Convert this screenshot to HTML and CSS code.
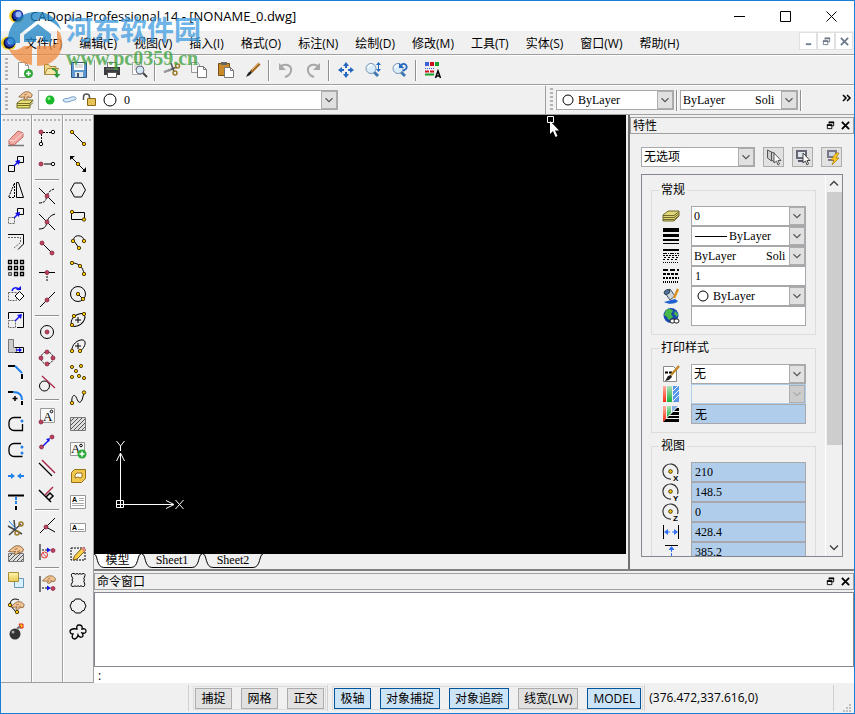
FILE: index.html
```html
<!DOCTYPE html>
<html lang="zh-CN">

<head>
  <meta charset="UTF-8" />
  <meta name="viewport" content="width=device-width, initial-scale=1.0" />
  <title>CADopia Professional 14 - [NONAME_0.dwg]</title>
  <link rel="stylesheet" href="styles.css">
</head>

<body>
  <svg class="defs" aria-hidden="true">
    <defs>
      <linearGradient id="redFade" x1="0" y1="0" x2="0" y2="1"><stop offset="0" stop-color="#ffb0a0" /><stop offset="1" stop-color="#ff2a10" /></linearGradient>
      <linearGradient id="greenFade" x1="0" y1="0" x2="0" y2="1"><stop offset="0" stop-color="#b0e0b8" /><stop offset="1" stop-color="#18b040" /></linearGradient>
      <linearGradient id="gold" x1="0" y1="0" x2="0" y2="1"><stop offset="0" stop-color="#fff8b0" /><stop offset="1" stop-color="#e8c850" /></linearGradient>
    </defs>
    <symbol id="chevron" viewBox="0 0 16 16"><path d="M4 6l4 4 4-4" fill="none" stroke="currentColor" stroke-width="1.3" /></symbol>
    <symbol id="hand" viewBox="0 0 16 10"><path d="M.5 6.500L5 2.500 8 .8l4 .2 3.500 3-1 3-3.500.5L8 9.500l-2-.7L7.500 6.500 4 7z" fill="#f3c795" stroke="#7a4a20" stroke-width=".8" /><path d="M6.500 4.500l3-1M9 7l3-1.500" stroke="#7a4a20" stroke-width=".7" /></symbol>
    <symbol id="lens" viewBox="0 0 18 18"><path d="M10 11l4 4" stroke="#3f78b0" stroke-width="3" /><circle cx="7" cy="7.500" r="5" fill="#d8ecfa" stroke="#7896b4" /><path d="M4 7a4 4 0 0 1 4-3" fill="none" stroke="#fff" stroke-width="1.500" /></symbol>
    <symbol id="logo" viewBox="0 0 16 16"><circle cx="6.500" cy="8" r="6.500" fill="#f4d020" /><circle cx="8.500" cy="8" r="6" fill="#10143c" /><circle cx="9" cy="7" r="5" fill="#2440b8" /><circle cx="9.500" cy="6.500" r="3" fill="#9bb8ff" /><path d="M5 13.500a7 7 0 0 0 9-4l.5 2c-2 4-6 4-9.500 2z" fill="#f4d020" /></symbol>
    <symbol id="restore" viewBox="0 0 10 10"><path d="M3.500 3V1.500h5v4H7M1.500 4.500h5v4h-5z" fill="none" stroke="currentColor" /><path d="M3 1.500h6M1 4.500h6" stroke="currentColor" stroke-width="2" /></symbol>
    <symbol id="cross" viewBox="0 0 10 10"><path d="M1 1l8 8M9 1L1 9" stroke="currentColor" stroke-width="2" /></symbol>
    <symbol id="orbit" viewBox="0 0 18 18"><path d="M15.500 11A7.500 7.500 0 1 0 9 16" fill="none" stroke="#333" stroke-width="1.200" /><circle cx="8.500" cy="8.500" r="1.800" class="dot-gold" /></symbol>
  </svg>

  <header class="titlebar">
    <svg class="app-icon"><use href="#logo" /></svg>
    <h1 class="title">CADopia Professional 14 - [NONAME_0.dwg]</h1>
    <button class="win-btn" aria-label="最小化"><svg viewBox="0 0 11 11"><path class="line" d="M0 5.500h11" /></svg></button>
    <button class="win-btn" aria-label="最大化"><svg viewBox="0 0 11 11"><path class="line" d="M.5.5h10v10H.5z" /></svg></button>
    <button class="win-btn" aria-label="关闭"><svg viewBox="0 0 11 11"><path class="line" d="M.5.5l10 10M10.500.5l-10 10" /></svg></button>
  </header>

  <nav class="menubar">
    <svg class="menu-logo"><use href="#logo" /></svg>
    <button class="menu">文件(F)</button>
    <button class="menu">编辑(E)</button>
    <button class="menu">视图(V)</button>
    <button class="menu">插入(I)</button>
    <button class="menu">格式(O)</button>
    <button class="menu">标注(N)</button>
    <button class="menu">绘制(D)</button>
    <button class="menu">修改(M)</button>
    <button class="menu">工具(T)</button>
    <button class="menu">实体(S)</button>
    <button class="menu">窗口(W)</button>
    <button class="menu">帮助(H)</button>
    <div class="mdi">
      <button class="mdi-btn" aria-label="最小化文档"><svg viewBox="0 0 10 10"><path d="M2 8h6" stroke="currentColor" stroke-width="2" /></svg></button>
      <button class="mdi-btn" aria-label="还原文档"><svg><use href="#restore" /></svg></button>
      <button class="mdi-btn" aria-label="关闭文档"><svg><use href="#cross" /></svg></button>
    </div>
  </nav>

  <div class="toolbar">
    <span class="handle"></span>
    <button class="tool" aria-label="新建"><svg viewBox="0 0 18 18"><path d="M2.500 1.500h7l3 3v12h-10z" fill="#fff" stroke="#999" /><path d="M9.500 1.500v3h3" fill="none" stroke="#999" /><circle cx="12.500" cy="12.500" r="4.500" fill="#2fa83a" /><path d="M12.500 10v5M10 12.500h5" stroke="#fff" stroke-width="1.500" /></svg></button>
    <button class="tool" aria-label="打开"><svg viewBox="0 0 18 18"><path d="M1.500 13V3.500h4l1.500 2h6V8" fill="#f0d98c" stroke="#a88838" /><path d="M1.500 13.500l3-6h11l-3 6z" fill="#f8e6a8" stroke="#a88838" /><path d="M9 8c4 0 5 2 5 6" fill="none" stroke="#2f9a3a" stroke-width="2" /><path d="M10.500 13h7L14 17z" fill="#2f9a3a" /></svg></button>
    <button class="tool" aria-label="保存"><svg viewBox="0 0 18 18"><path d="M1.500 1.500h15v15h-15z" fill="#5f98cf" stroke="#2c5888" /><path d="M4 2h10v7H4z" fill="#fff" /><path d="M5 4h8M5 6h8" stroke="#bbb" /><path d="M5 11h8v5H5z" fill="#dde4ec" /><path d="M7 12h2v4H7z" fill="#456" /></svg></button>
    <span class="sep"></span>
    <button class="tool" aria-label="打印"><svg viewBox="0 0 18 18"><path d="M4.500 7V1.500h9V7" fill="#fff" stroke="#777" /><path d="M1 6h16v8H1z" fill="#3a3c40" /><path d="M3 8h12" stroke="#888" /><path d="M4.500 11.500h9v5h-9z" fill="#fff" stroke="#555" /></svg></button>
    <button class="tool" aria-label="打印预览"><svg viewBox="0 0 18 18"><path d="M2.500 1.500h9v12h-9z" fill="#fff" stroke="#aaa" /><path d="M4 4h6M4 6h6M4 8h3" stroke="#bbb" /><circle cx="10" cy="9" r="4" fill="#d5e8f5" stroke="#667" /><path d="M13 12l4 4" stroke="#444" stroke-width="2" /></svg></button>
    <span class="sep"></span>
    <button class="tool" aria-label="剪切"><svg viewBox="0 0 18 18"><path d="M8 2l3 9M1 11l13-5" stroke="#555" stroke-width="1.600" /><circle cx="14.500" cy="5" r="2" class="ring-gold" /><circle cx="12" cy="12" r="2" class="ring-gold" /><path d="M1 11l7-2" stroke="#999" stroke-width="2" /></svg></button>
    <button class="tool" aria-label="复制"><svg viewBox="0 0 18 18"><path d="M1.500 1.500h6l2 2v8h-8z" fill="#f4f4f4" stroke="#999" /><path d="M7.500 5.500h6l3 3v8h-9z" fill="#fff" stroke="#777" /><path d="M13.500 5.500v3h3" fill="none" stroke="#777" /></svg></button>
    <button class="tool" aria-label="粘贴"><svg viewBox="0 0 18 18"><path d="M1.500 2.500h11v12h-11z" fill="#c98a2c" stroke="#7a5014" /><path d="M4 1h6v3H4z" fill="#666" /><path d="M7.500 6.500h6l3 3v7h-9z" fill="#fff" stroke="#777" /><path d="M13.500 6.500v3h3" fill="none" stroke="#777" /></svg></button>
    <button class="tool" aria-label="特性匹配"><svg viewBox="0 0 18 18"><path d="M15.500 2.500L7 11" stroke="#a06420" stroke-width="3" /><path d="M15 2L8 9" stroke="#e8b060" /><path d="M2 16l2-4 2.500-2L8 11.500 6 14z" fill="#222" /></svg></button>
    <span class="sep"></span>
    <button class="tool" aria-label="放弃"><svg viewBox="0 0 18 18"><path d="M4 5c6-3 11 0 10 5-.5 3-3 5-6 6" class="undo" /><path d="M2 2v7h7z" fill="#a8a8a8" /></svg></button>
    <button class="tool" aria-label="重做"><svg viewBox="0 0 18 18"><path d="M14 5C8 2 3 5 4 10c.5 3 3 5 6 6" class="undo" /><path d="M16 2v7H9z" fill="#a8a8a8" /></svg></button>
    <span class="sep"></span>
    <button class="tool" aria-label="平移"><svg viewBox="0 0 18 18"><path d="M9 1l3 4H6zM9 17l3-4H6zM1 9l4-3v6zM17 9l-4-3v6z" fill="#2468c0" /><path d="M9 4v3M9 11v3M4 9h3M11 9h3" stroke="#2468c0" stroke-width="2" /></svg></button>
    <button class="tool" aria-label="动态缩放"><svg viewBox="0 0 18 18"><use href="#lens" width="18" height="18" /><path d="M14.500 1l2.500 3h-5zM14.500 11L17 8h-5zM14 4h1v4h-1z" fill="#2468c0" /></svg></button>
    <button class="tool" aria-label="缩放上一个"><svg viewBox="0 0 18 18"><use href="#lens" width="18" height="18" /><path d="M10 4c4-3 7 1 5 4l-3 2" fill="none" stroke="#2468c0" stroke-width="1.700" /><path d="M8 2v5h5z" fill="#2468c0" /></svg></button>
    <span class="sep"></span>
    <button class="tool" aria-label="特性"><svg viewBox="0 0 18 18"><path d="M1 1h4v4H1z" fill="#4060d8" /><path d="M6 1h4v4H6z" fill="#d01020" /><path d="M11 1h4v4h-4z" fill="#18a028" /><path d="M1 7.500h9" stroke="#4060d8" stroke-dasharray="1 1" /><path d="M1 10.500h9" stroke="#d01020" stroke-width="2" stroke-dasharray="4 1" /><path d="M1 13.500h9" stroke="#18a028" stroke-width="2" /><path d="M11.500 17l2.500-7 2.500 7M12 15h4" class="line" stroke-width="1.500" /></svg></button>
  </div>

  <div class="toolbar-row">
    <div class="toolbar layer-bar">
      <span class="handle"></span>
      <button class="tool" aria-label="图层"><svg viewBox="0 0 18 18"><path d="M1 12l4-3h12l-3 3v5H1z" fill="#e8e070" stroke="#77702a" /><path d="M1 12.500h13l3-3M1 14.500h13l3-3" fill="none" stroke="#77702a" /><use href="#hand" x="2" y="0" width="15" height="9" /></svg></button>
      <div class="combo layer-combo">
        <svg class="layer-icons" viewBox="0 0 76 16"><circle cx="6" cy="8" r="4.500" fill="#18b828" /><circle cx="5" cy="6.500" r="1.500" fill="#8cf090" /><path d="M19 8c1-2 4-1 6-2s6-2 7 0-3 2-5 3-8 2-8-1z" fill="#d8ecfc" stroke="#7098c0" /><path d="M39.500 8V5a3 3 0 0 1 6 0v3" fill="none" stroke="#555" stroke-width="1.500" /><path d="M43.500 6.500h8v7h-8z" fill="#e8c458" stroke="#8a6818" /><circle cx="66" cy="8" r="6" class="line" /></svg>
        <select aria-label="当前图层"><option>0</option></select>
        <span class="arrow"><svg><use href="#chevron" /></svg></span>
      </div>
    </div>
    <div class="toolbar prop-bar">
      <span class="handle"></span>
      <div class="combo color-combo">
        <svg class="swatch" viewBox="0 0 12 12"><circle cx="6" cy="6" r="5" class="line" /></svg>
        <select aria-label="颜色"><option>ByLayer</option></select>
        <span class="arrow"><svg><use href="#chevron" /></svg></span>
      </div>
      <span class="sep"></span>
      <div class="combo">
        <select aria-label="线型"><option>ByLayer&nbsp;&nbsp;&nbsp;&nbsp;&nbsp;&nbsp;&nbsp;&nbsp;&nbsp;&nbsp;Soli</option></select>
        <span class="arrow"><svg><use href="#chevron" /></svg></span>
      </div>
      <span class="sep"></span>
      <button class="more" aria-label="更多"><svg viewBox="0 0 10 8"><path class="line" stroke-width="1.500" d="M1 1l3 3-3 3M5 1l3 3-3 3" /></svg></button>
    </div>
  </div>

  <main class="workspace">
    <aside class="palettes">
      <!-- modify -->
      <div class="palette">
        <span class="grip"></span>
        <button class="tool" aria-label="删除"><svg viewBox="0 0 18 18"><path d="M1 16.500h16" stroke="#777" stroke-width="1.500" /><path d="M2 11l9-9 5 2v4l-9 8-5-1z" fill="#f0a8a0" stroke="#c06860" /><path d="M2 11l5 1 9-8" fill="none" stroke="#fbd8d4" /></svg></button>
        <button class="tool" aria-label="复制"><svg viewBox="0 0 18 18"><path class="line" d="M10.500 1.500h6v6h-6zM1.500 10.500h6v6h-6z" /><path class="blue-line" d="M7 11l5-5" /><path class="blue" d="M8 6l5-1-1 5z" /></svg></button>
        <button class="tool" aria-label="镜像"><svg viewBox="0 0 18 18"><path class="dash" d="M7.500 2v14.500h-6z" /><path class="line" d="M9.500 1.500h2l5 15h-7z" /></svg></button>
        <button class="tool" aria-label="移动"><svg viewBox="0 0 18 18"><path class="line" d="M10.500 1.500h6v6h-6z" /><path class="dash gray" d="M1.500 10.500h6v6h-6z" /><path class="blue-line" d="M7 11l5-5" /><path class="blue" d="M8 6l5-1-1 5z" /></svg></button>
        <button class="tool" aria-label="偏移"><svg viewBox="0 0 18 18"><path class="line" d="M1 1.500h15.500V11L11 16.500" /><path class="dash gray" d="M1 4.500h12.500v5l-7 6" /></svg></button>
        <button class="tool" aria-label="阵列"><svg viewBox="0 0 18 18"><path class="line" stroke-width="1.300" d="M1.500 1.500h3v3h-3zM7.500 1.500h3v3h-3zM13.500 1.500h3v3h-3zM1.500 7.500h3v3h-3zM7.500 7.500h3v3h-3zM13.500 7.500h3v3h-3zM7.500 13.500h3v3h-3zM13.500 13.500h3v3h-3z" /><path d="M1.500 13.500h3v3h-3z" fill="#aaa" stroke="#555" /></svg></button>
        <button class="tool" aria-label="旋转"><svg viewBox="0 0 18 18"><path class="dash gray" d="M1.500 7.500h8v8h-8z" /><path d="M12.500 6.500L17 11l-4.500 4.500L8 11z" fill="#fff" stroke="#000" /><path class="blue-line" d="M5 6c1-4 5-4 7-1" /><path class="blue" d="M9 5h5V1z" /></svg></button>
        <button class="tool" aria-label="比例"><svg viewBox="0 0 18 18"><path class="line" d="M1.500 8V1.500h15v15H10" /><path class="dash gray" d="M1.500 9.500h7v7h-7z" /><path class="blue-line" d="M8 10l5-5" /><path class="blue" d="M10 4l5-1-1 5z" /></svg></button>
        <button class="tool" aria-label="拉伸"><svg viewBox="0 0 18 18"><path d="M1.500 2.500h5v8h3v5h-8z" fill="#ccc" stroke="#777" /><path class="line" d="M8 10.500h8.500v5H8" /><path class="blue-line" d="M9 13h3" /><path class="blue" d="M12 10.500v5l3-2.500z" /></svg></button>
        <button class="tool" aria-label="倒角"><svg viewBox="0 0 18 18"><path class="line bold" d="M1 3h7M15 11v5" /><path class="sky-line" d="M8 3l7 7" /></svg></button>
        <button class="tool" aria-label="圆角"><svg viewBox="0 0 18 18"><path class="line bold" d="M1 3h5M15 12v4" /><path class="sky-line" d="M6 3c6 0 9 3 9 8" /><path class="line" d="M8 7v5M5.500 9.500h5" stroke-width="1.500" /></svg></button>
        <button class="tool" aria-label="打断于点"><svg viewBox="0 0 18 18"><path class="line" stroke-width="1.300" d="M14 2.500H7a5 5 0 0 0-5 5v3a5 5 0 0 0 5 5h8.500V9" /><circle cx="15" cy="6" r="1.500" fill="#2080e8" /></svg></button>
        <button class="tool" aria-label="打断"><svg viewBox="0 0 18 18"><path class="line" stroke-width="1.300" d="M14 2.500H7a5 5 0 0 0-5 5v3a5 5 0 0 0 5 5h8.500" /><circle cx="15" cy="6" r="1.500" fill="#2080e8" /><circle cx="15" cy="12" r="1.500" fill="#2080e8" /></svg></button>
        <button class="tool" aria-label="合并"><svg viewBox="0 0 18 18"><path class="sky-line" d="M1 9h4M13 9h4" /><path d="M4 6l4 3-4 3zM14 6l-4 3 4 3z" fill="#2080e8" /></svg></button>
        <button class="tool" aria-label="延伸"><svg viewBox="0 0 18 18"><path class="line bold" d="M1 2.500h16M9 13v4" /><path class="sky-line" stroke-dasharray="3 1" d="M9 4v8" /></svg></button>
        <button class="tool" aria-label="修剪"><svg viewBox="0 0 18 18"><path d="M7 1l1 9M1 7l14 8M2 16L14 5" stroke="#444" stroke-width="1.500" /><path d="M2 2l7 8" stroke="#2080e8" /><circle cx="14" cy="5" r="2" class="ring-gold" /><circle cx="10" cy="14" r="2" class="ring-gold" /></svg></button>
        <button class="tool" aria-label="编辑填充"><svg viewBox="0 0 18 18"><path d="M1.500 8.500h15v8h-15z" fill="#ddd" stroke="#777" /><path d="M2 12l3-3M2 16l7-7M6 16l7-7M10 16l6-6M14 16l2-2" stroke="#555" /><use href="#hand" x="1" y="0" width="16" height="10" /></svg></button>
        <button class="tool" aria-label="绘制顺序"><svg viewBox="0 0 18 18"><path d="M7.500 7.500h9v9h-9z" fill="#d8f0ff" stroke="#6898b8" /><path d="M1.500 1.500h10v9h-10z" fill="url(#gold)" stroke="#a89038" /></svg></button>
        <button class="tool" aria-label="编辑多段线"><svg viewBox="0 0 18 18"><path class="line" d="M3 8C3 2 8 1 12 3M3 8l6 7" /><use href="#hand" x="3" y="4" width="15" height="9" /><circle cx="3" cy="8" r="1.700" class="dot-gold" /><circle cx="10" cy="15" r="1.700" class="dot-gold" /></svg></button>
        <button class="tool" aria-label="分解"><svg viewBox="0 0 18 18"><circle cx="8" cy="11" r="5.500" fill="#333" /><circle cx="6" cy="9" r="1.500" fill="#aaa" /><path d="M10 6l2-2 2 1" stroke="#777" stroke-width="2" fill="none" /><path d="M12 1h4v4h-2z" fill="#ffd020" stroke="#e02010" /></svg></button>
      </div>

      <!-- entity snaps -->
      <div class="palette">
        <span class="grip"></span>
        <button class="tool" aria-label="临时追踪点"><svg viewBox="0 0 18 18"><path class="dash" d="M5 3.500h9M3.500 5v9" /><circle cx="3" cy="3" r="2" class="dot-red" /><circle cx="15" cy="3" r="1.700" class="dot-open" /><circle cx="3" cy="15" r="1.700" class="dot-open" /></svg></button>
        <button class="tool" aria-label="捕捉自"><svg viewBox="0 0 18 18"><path class="line" d="M6 9h7" /><circle cx="3" cy="9" r="2" class="dot-red" /><circle cx="15" cy="9" r="1.700" class="dot-open" /></svg></button>
        <span class="rule"></span>
        <button class="tool" aria-label="外观交点"><svg viewBox="0 0 18 18"><path class="line" d="M1 1l16 16" /><path class="line" stroke-dasharray="3 1" d="M1 16c7 0 7-4 8-7s2-5 7-7" /><circle cx="9" cy="9" r="2" class="dot-red" /></svg></button>
        <button class="tool" aria-label="交点"><svg viewBox="0 0 18 18"><path class="line" d="M1 1l16 16M1 16c7 0 7-4 8-7s2-6 8-8" /><circle cx="9" cy="9" r="2" class="dot-red" /></svg></button>
        <button class="tool" aria-label="端点"><svg viewBox="0 0 18 18"><path class="line" d="M4 4l10 10" /><circle cx="4" cy="4" r="2" class="dot-red" /><circle cx="14" cy="14" r="2" class="dot-red" /></svg></button>
        <button class="tool" aria-label="中点"><svg viewBox="0 0 18 18"><path class="line" d="M1 7.500h16" /><path class="dash" d="M9 8v9" /><circle cx="9" cy="7.500" r="2" class="dot-red" /></svg></button>
        <button class="tool" aria-label="最近点"><svg viewBox="0 0 18 18"><path class="line" d="M2 16L17 1" /><circle cx="9" cy="9" r="2" class="dot-red" /></svg></button>
        <span class="rule"></span>
        <button class="tool" aria-label="圆心"><svg viewBox="0 0 18 18"><circle cx="9" cy="9" r="6.500" class="line" /><circle cx="9" cy="9" r="2" class="dot-red" /></svg></button>
        <button class="tool" aria-label="象限点"><svg viewBox="0 0 18 18"><circle cx="9" cy="9" r="6" class="line" stroke-dasharray="2 1" /><circle cx="9" cy="3" r="2" class="dot-red" /><circle cx="9" cy="15" r="2" class="dot-red" /><circle cx="3" cy="9" r="2" class="dot-red" /><circle cx="15" cy="9" r="2" class="dot-red" /></svg></button>
        <button class="tool" aria-label="切点"><svg viewBox="0 0 18 18"><circle cx="6.500" cy="11" r="5" class="line" /><path d="M4 1l13 12" stroke="#a82848" stroke-width="1.300" /></svg></button>
        <span class="rule"></span>
        <button class="tool" aria-label="插入点"><svg viewBox="0 0 18 18"><path d="M2.500 1.500h14v14h-14z" fill="#f8f8f8" stroke="#999" /><text x="5" y="14" class="glyph serif">A</text><circle cx="13.500" cy="4.500" r="1.300" class="line" /><circle cx="3" cy="15" r="2" class="dot-red" /></svg></button>
        <button class="tool" aria-label="节点"><svg viewBox="0 0 18 18"><path class="blue-line" d="M5 13l6-6" /><path class="blue" d="M8 6l4-1-1 4z" /><circle cx="3.500" cy="14" r="2" class="dot-red" /><circle cx="14" cy="4" r="2" class="dot-red" /></svg></button>
        <button class="tool" aria-label="平行"><svg viewBox="0 0 18 18"><path class="line" d="M1 4l13 13" stroke-width="1.300" /><path d="M4 1l13 13" stroke="#a82848" stroke-width="1.500" /></svg></button>
        <button class="tool" aria-label="垂足"><svg viewBox="0 0 18 18"><path class="line" stroke-width="1.500" d="M1 5l12 12M8 12l4-4 3 3-4 4" /><path d="M7 10l8-8" stroke="#a82848" stroke-width="1.500" /></svg></button>
        <span class="rule"></span>
        <button class="tool" aria-label="交叉"><svg viewBox="0 0 18 18"><path class="line" d="M2 16L17 1M8 10l9 5" /><circle cx="8" cy="10" r="2" class="dot-red" /></svg></button>
        <button class="tool" aria-label="无捕捉"><svg viewBox="0 0 18 18"><path class="line" d="M2 1v16" /><path class="dash" d="M4 7h6" /><path class="blue" d="M9 4.500v5l4-2.500z" /><circle cx="15" cy="7.500" r="2" class="dot-red" /><circle cx="6.500" cy="12" r="3" fill="none" stroke="#e03030" /><path d="M4.500 10l4 4" stroke="#e03030" /></svg></button>
        <span class="rule"></span>
        <button class="tool" aria-label="捕捉设置"><svg viewBox="0 0 18 18"><path class="line" d="M2 1v16" /><path class="dash" d="M4 13h6" /><path class="blue" d="M9 10.500v5l4-2.500z" /><circle cx="15" cy="13.500" r="2" class="dot-red" /><use href="#hand" x="4" y="0" width="14" height="9" /></svg></button>
      </div>

      <!-- draw -->
      <div class="palette">
        <span class="grip"></span>
        <button class="tool" aria-label="直线"><svg viewBox="0 0 18 18"><path class="line" d="M3 3l12 12" /><circle cx="3" cy="3" r="1.700" class="dot-gold" /><circle cx="15" cy="15" r="1.700" class="dot-gold" /></svg></button>
        <button class="tool" aria-label="构造线"><svg viewBox="0 0 18 18"><path class="line" d="M3 3l12 12" /><path d="M1 1h5L1 5zM17 17v-5l-4 5z" /><circle cx="9" cy="9" r="1.700" class="dot-gold" /></svg></button>
        <button class="tool" aria-label="多边形"><svg viewBox="0 0 18 18"><path class="line" d="M5.500 2h7l4 7-4 7h-7l-4-7z" /></svg></button>
        <button class="tool" aria-label="矩形"><svg viewBox="0 0 18 18"><path class="line" d="M2.500 5.500h13v7h-13z" /><circle cx="3" cy="5" r="1.700" class="dot-gold" /><circle cx="15" cy="12.500" r="1.700" class="dot-gold" /></svg></button>
        <button class="tool" aria-label="三点圆弧"><svg viewBox="0 0 18 18"><path class="line" d="M15 8C15 1 3 1 5 8l5 7" /><circle cx="15" cy="8" r="1.700" class="dot-gold" /><circle cx="4" cy="8" r="1.700" class="dot-gold" /><circle cx="10" cy="15" r="1.700" class="dot-gold" /></svg></button>
        <button class="tool" aria-label="圆弧"><svg viewBox="0 0 18 18"><path class="line" d="M3 4c7 0 11 4 12 11" /><circle cx="3" cy="4" r="1.700" class="dot-gold" /><circle cx="11" cy="7" r="1.700" class="dot-gold" /><circle cx="15" cy="15" r="1.700" class="dot-gold" /></svg></button>
        <button class="tool" aria-label="圆"><svg viewBox="0 0 18 18"><circle cx="9" cy="9" r="7.500" class="line" /><path class="line" d="M9 9l5 5" /><circle cx="9" cy="9" r="1.700" class="dot-gold" /><circle cx="14" cy="14" r="1.700" class="dot-gold" /></svg></button>
        <button class="tool" aria-label="椭圆"><svg viewBox="0 0 18 18"><ellipse cx="9" cy="9" rx="8" ry="5" transform="rotate(-40 9 9)" class="line" /><path class="line" d="M9 6v6M6 9h6" /><circle cx="15" cy="3" r="1.700" class="dot-gold" /><circle cx="5" cy="5" r="1.700" class="dot-gold" /><circle cx="3" cy="14" r="1.700" class="dot-gold" /></svg></button>
        <button class="tool" aria-label="椭圆弧"><svg viewBox="0 0 18 18"><path class="line" d="M3 14C2 8 9 2 14 3c4 1 2 8-3 11M9 6v6M6 9h6" /><circle cx="3" cy="14" r="1.700" class="dot-gold" /><circle cx="11" cy="14" r="1.700" class="dot-gold" /></svg></button>
        <button class="tool" aria-label="点"><svg viewBox="0 0 18 18"><circle cx="3" cy="4" r="1.600" class="dot-gold" /><circle cx="12" cy="3" r="1.600" class="dot-gold" /><circle cx="7" cy="8" r="1.600" class="dot-gold" /><circle cx="3" cy="14" r="1.600" class="dot-gold" /><circle cx="10" cy="13" r="1.600" class="dot-gold" /><circle cx="15" cy="15" r="1.600" class="dot-gold" /></svg></button>
        <button class="tool" aria-label="样条曲线"><svg viewBox="0 0 18 18"><path class="line" d="M3 14C2 8 5 4 7 8s3 8 6 3l2-7" /><circle cx="3" cy="14" r="1.700" class="dot-gold" /><circle cx="15" cy="3.500" r="1.700" class="dot-gold" /></svg></button>
        <button class="tool" aria-label="填充"><svg viewBox="0 0 18 18"><path d="M1.500 2.500h15v13h-15z" fill="#ddd" stroke="#777" /><path d="M2 6l3-3M2 10l7-7M2 14l11-11M5 15L16 4M9 15l7-7M13 15l3-3" stroke="#555" /></svg></button>
        <button class="tool" aria-label="插入文字"><svg viewBox="0 0 18 18"><path d="M1.500 1.500h14v13h-14z" fill="#f8f8f8" stroke="#999" /><text x="2" y="12" class="glyph serif">A</text><circle cx="12" cy="4.500" r="1.300" class="line" /><circle cx="13" cy="13" r="4.500" fill="#2fa83a" /><path d="M13 10.500v5M10.500 13h5" stroke="#fff" stroke-width="1.500" /></svg></button>
        <button class="tool" aria-label="面域"><svg viewBox="0 0 18 18"><path d="M2.500 5.500l3-3h11v9l-4 4h-10z" fill="#f0c850" stroke="#987018" /><path d="M6 11V8l2-2h5v4l-2 1-2-1z" fill="#fff" stroke="#987018" /></svg></button>
        <button class="tool" aria-label="多行文字"><svg viewBox="0 0 18 18"><path d="M1.500 2.500h15v13h-15z" fill="#fff" stroke="#999" /><text x="3" y="9" class="glyph tiny">A</text><path d="M10 5.500h5M10 7.500h5M3 10.500h12M3 12.500h12" stroke="#aaa" /></svg></button>
        <button class="tool" aria-label="单行文字"><svg viewBox="0 0 18 18"><path d="M1.500 4.500h15v8h-15z" fill="#fff" stroke="#999" /><text x="3" y="11" class="glyph tiny">A</text><path d="M9 10.500h6" stroke="#999" /></svg></button>
        <button class="tool" aria-label="手绘云线"><svg viewBox="0 0 18 18"><path class="line cloud" d="M2 3h14v12H2z" /><path d="M4 15l1.500-4L13 3l3 3-8 8z" fill="#f8d048" stroke="#805818" /><path d="M12 4l2-2 3 3-2 2z" fill="#e88878" /></svg></button>
        <button class="tool" aria-label="矩形云线"><svg viewBox="0 0 18 18"><path class="line" d="M3 6q-2-4 2-3.500 1.500 1.500 3 0 1.500 1.500 3 0 1.500 1.500 3 0 3 0 1.500 3.500-1.500 1.500 0 3-1.500 1.500 0 3 1 4-2 3.500-1.500-1.500-3 0-1.500-1.500-3 0-1.500-1.500-3 0-4 0-1.500-3.500 1.500-1.500 0-3 1.500-1.500 0-3z" /></svg></button>
        <button class="tool" aria-label="圆形云线"><svg viewBox="0 0 18 18"><path class="line" d="M5 4q1-3 4-2 3-1 4 2 3 0 3 3 2 2 0 4 0 3-3 3-1 3-4 2-3 1-4-2-3 0-3-3-2-2 0-4 0-3 3-3z" /></svg></button>
        <button class="tool" aria-label="云线"><svg viewBox="0 0 18 18"><path class="line" stroke-width="1.300" d="M8 6q-1-4 2-4 4 0 3 4 4-1 4 2t-4 2q2 3 0 4-3 1-4-2-1 4-4 4-3-1-1-5-3 0-3-3 1-3 7-2z" /></svg></button>
      </div>
    </aside>

    <div class="right">
      <div class="upper">
        <section class="drawing">
          <div class="canvas">
            <svg class="ucs" viewBox="0 0 80 80">
              <path d="M14.500 64V16M10.500 24l4-8 4 8M18 67.500h49M60 63.500l8 4-8 4" />
              <path d="M10.500 63.500h7v7h-7zM14.500 64v7M11 67.500h7" />
              <path d="M10.500 4l4 5 4-5M14.500 9v5M69.500 63l8 9M77.500 63l-8 9" />
            </svg>
            <svg class="cursor" viewBox="0 0 14 22"><path d="M1.500 1.500h6v6h-6z" fill="none" stroke="#fff" /><path d="M4 6v13l3-3 2.500 6 2-1L9 15.500h4z" fill="#fff" /></svg>
          </div>
          <div class="tabs">
            <button class="tab active"><svg viewBox="0 0 10 14"><path d="M0 0c4 0 2 13.500 10 13.500V0z" /></svg><span>模型</span><svg viewBox="0 0 10 14"><path d="M10 0C6 0 8 13.500 0 13.500V0z" /></svg></button>
            <button class="tab"><svg viewBox="0 0 10 14"><path d="M0 0c4 0 2 13.500 10 13.500V0z" /></svg><span>Sheet1</span><svg viewBox="0 0 10 14"><path d="M10 0C6 0 8 13.500 0 13.500V0z" /></svg></button>
            <button class="tab"><svg viewBox="0 0 10 14"><path d="M0 0c4 0 2 13.500 10 13.500V0z" /></svg><span>Sheet2</span><svg viewBox="0 0 10 14"><path d="M10 0C6 0 8 13.500 0 13.500V0z" /></svg></button>
          </div>
        </section>

        <section class="properties">
          <div class="dock-title">
            <h2>特性</h2>
            <button aria-label="浮动"><svg><use href="#restore" /></svg></button>
            <button aria-label="关闭特性"><svg><use href="#cross" /></svg></button>
          </div>
          <div class="selector">
            <div class="combo">
              <select aria-label="选择集"><option>无选项</option></select>
              <span class="arrow"><svg><use href="#chevron" /></svg></span>
            </div>
            <button class="square" aria-label="选择图元"><svg viewBox="0 0 18 18"><path d="M2.500 2v8l4 3V4zM6.500 4v8l3 2V5z" fill="#ccc" stroke="#555" /><path d="M9 5v10l2.500-2 1.500 4 1.500-1-1.500-3.500h3z" fill="#fff" stroke="#555" /></svg></button>
            <button class="square" aria-label="窗口选择"><svg viewBox="0 0 18 18"><path d="M2 2h11v9H2z" fill="#667" /><path d="M4 4h7v5H4z" fill="#dfe6ec" /><path d="M4 12h6v2H4z" fill="#556" /><path d="M9 5v10l2.500-2 1.500 4 1.500-1-1.500-3.500h3z" fill="#fff" stroke="#444" /></svg></button>
            <button class="square" aria-label="快速选择"><svg viewBox="0 0 18 18"><path d="M4 2h10v8H4z" fill="#778" /><path d="M6 4h6v4H6z" fill="#cdd6e0" /><path d="M5 11h6v2H5z" fill="#778" /><path d="M13 5l-5 7h3l-2 5 7-7h-3l3-5z" fill="#ffc820" stroke="#a87808" stroke-width=".7" /></svg></button>
          </div>
          <div class="sheet">
            <div class="groups">
              <fieldset>
                <legend>常规</legend>
                <div class="row">
                  <svg class="row-icon" viewBox="0 0 18 18"><path d="M1 8l5-4h11v5l-5 5H1z" fill="#e0d878" stroke="#706828" /><path d="M1 8.500h11l5-4M1 10.500h11l5-4M1 12.500h11l5-4" fill="none" stroke="#706828" /></svg>
                  <div class="combo"><select aria-label="图层"><option>0</option></select><span class="arrow"><svg><use href="#chevron" /></svg></span></div>
                </div>
                <div class="row">
                  <svg class="row-icon" viewBox="0 0 18 18"><path d="M1 1h16v4H1zM1 7h16v3H1zM1 12h16v2H1zM1 16h16v1H1z" /></svg>
                  <div class="combo weight-combo"><span class="sample"></span><select aria-label="线宽"><option>ByLayer</option></select><span class="arrow"><svg><use href="#chevron" /></svg></span></div>
                </div>
                <div class="row">
                  <svg class="row-icon" viewBox="0 0 18 18"><path class="line bold" d="M1 3h16" /><path class="line" stroke-dasharray="4 1 1 1" d="M1 6.500h16" /><path class="line" stroke-dasharray="2 1" d="M1 8.500h16" /><path class="line" stroke-dasharray="2 2" d="M2 10.500h15M1 12.500h16" /><path class="line" stroke-dasharray="1 1" d="M1 15.500h16" /></svg>
                  <div class="combo"><select aria-label="线条样式"><option>ByLayer&nbsp;&nbsp;&nbsp;&nbsp;&nbsp;&nbsp;&nbsp;&nbsp;&nbsp;&nbsp;Soli</option></select><span class="arrow"><svg><use href="#chevron" /></svg></span></div>
                </div>
                <div class="row">
                  <svg class="row-icon" viewBox="0 0 18 18"><path class="line bold" stroke-dasharray="5 2" d="M1 3h16" /><path class="line bold" stroke-dasharray="3 1" d="M1 7h16" /><path class="line bold" stroke-dasharray="2 1" d="M1 11h16" /><path class="line bold" stroke-dasharray="1 1" d="M1 15h16" /></svg>
                  <input type="text" aria-label="线型比例" value="1">
                </div>
                <div class="row">
                  <svg class="row-icon" viewBox="0 0 18 18"><path d="M2 15c5 3 12 2 14-1l-3-2z" fill="#2060d0" /><path d="M3 6l5-4 5 7-5 4z" fill="#ccd4dc" stroke="#456" /><ellipse cx="5" cy="5" rx="3" ry="2" fill="#5078a0" stroke="#345" transform="rotate(-35 5 5)" /><path d="M16 2l-4 9" stroke="#d89020" stroke-width="2.500" /></svg>
                  <div class="combo color-combo"><svg class="swatch" viewBox="0 0 12 12"><circle cx="6" cy="6" r="5" class="line" /></svg><select aria-label="线条颜色"><option>ByLayer</option></select><span class="arrow"><svg><use href="#chevron" /></svg></span></div>
                </div>
                <div class="row">
                  <svg class="row-icon" viewBox="0 0 18 18"><circle cx="9" cy="8.500" r="7.500" fill="#1a48b0" /><path d="M4 3c4-2 6-1 7 1L9 7l2 3-4 3-3-4-2-1z" fill="#48b848" /><path d="M13 4l3 3-1 3-3-3z" fill="#48b848" /><rect x="8" y="12" width="5" height="4" rx="2" fill="#fff" stroke="#222" /><rect x="12" y="12" width="5" height="4" rx="2" fill="#fff" stroke="#222" /></svg>
                  <input type="text" aria-label="超链接">
                </div>
              </fieldset>
              <fieldset>
                <legend>打印样式</legend>
                <div class="row">
                  <svg class="row-icon" viewBox="0 0 18 18"><path d="M1.500 1.500h10l3 3v12h-13z" fill="#fff" stroke="#888" /><path d="M3 7.500h9" class="line bold" stroke-dasharray="3 1" /><path d="M17 1l-8 9" stroke="#c08828" stroke-width="2.500" /><path d="M3 16l3-5 3-1 1 2-3 3z" fill="#222" /></svg>
                  <div class="combo"><select aria-label="打印样式"><option>无</option></select><span class="arrow"><svg><use href="#chevron" /></svg></span></div>
                </div>
                <div class="row">
                  <svg class="row-icon" viewBox="0 0 18 18"><path d="M1 1h3v16H1z" fill="url(#redFade)" /><path d="M5 1h5v16H5z" fill="url(#greenFade)" /><path d="M11 1h6v16h-6z" fill="#5898e8" /><path d="M11 6l5-5M11 11l6-6M11 16l6-6" stroke="#fff" /></svg>
                  <div class="combo disabled"><select aria-label="打印样式表" disabled></select><span class="arrow"><svg><use href="#chevron" /></svg></span></div>
                </div>
                <div class="row">
                  <svg class="row-icon" viewBox="0 0 18 18"><path d="M1 1h3v13l-3 3z" fill="url(#redFade)" /><path d="M5 1h4v7l-4 4z" fill="url(#greenFade)" /><path d="M10 1h6l-6 6z" fill="#88b0e0" /><path d="M15 3h2v3h-5zM11 7h6v3H8zM7 11h10v2H5zM4 14h13v3H1z" /></svg>
                  <input type="text" class="locked" aria-label="打印表类型" value="无" readonly>
                </div>
              </fieldset>
              <fieldset>
                <legend>视图</legend>
                <div class="row">
                  <svg class="row-icon" viewBox="0 0 18 18"><use href="#orbit" width="18" height="18" /><text x="11" y="18" class="glyph axis">X</text></svg>
                  <input type="text" class="locked" aria-label="中心 X" value="210" readonly>
                </div>
                <div class="row">
                  <svg class="row-icon" viewBox="0 0 18 18"><use href="#orbit" width="18" height="18" /><text x="11" y="18" class="glyph axis">Y</text></svg>
                  <input type="text" class="locked" aria-label="中心 Y" value="148.5" readonly>
                </div>
                <div class="row">
                  <svg class="row-icon" viewBox="0 0 18 18"><use href="#orbit" width="18" height="18" /><text x="11" y="18" class="glyph axis">Z</text></svg>
                  <input type="text" class="locked" aria-label="中心 Z" value="0" readonly>
                </div>
                <div class="row">
                  <svg class="row-icon" viewBox="0 0 18 18"><path class="line" d="M1.500 2v14M16.500 2v14" /><path d="M2 9l4-3v6zM16 9l-4-3v6z" fill="#3070f0" /><path d="M5 9h3M10 9h3" stroke="#3070f0" /></svg>
                  <input type="text" class="locked" aria-label="宽度" value="428.4" readonly>
                </div>
                <div class="row">
                  <svg class="row-icon" viewBox="0 0 18 18"><path class="line" d="M3 2.500h13M3 16.500h13" /><path d="M9.500 3l3 4h-6z" fill="#3070f0" /><path d="M9.500 6v3M9.500 10v3" stroke="#3070f0" /></svg>
                  <input type="text" class="locked" aria-label="高度" value="385.2" readonly>
                </div>
              </fieldset>
            </div>
            <div class="scrollbar">
              <svg class="up"><use href="#chevron" /></svg>
              <span class="thumb"></span>
              <svg><use href="#chevron" /></svg>
            </div>
          </div>
        </section>
      </div>

      <section class="command">
        <div class="dock-title">
          <h2>命令窗口</h2>
          <button aria-label="浮动"><svg><use href="#restore" /></svg></button>
          <button aria-label="关闭命令窗口"><svg><use href="#cross" /></svg></button>
        </div>
        <textarea class="history" aria-label="命令历史" readonly></textarea>
        <label class="prompt">:<input type="text" aria-label="命令"></label>
      </section>
    </div>
  </main>

  <footer class="statusbar">
    <div class="pane">
      <div class="toggles">
        <button class="toggle">捕捉</button>
        <button class="toggle">网格</button>
        <button class="toggle">正交</button>
      </div>
    </div>
    <div class="pane">
      <div class="toggles">
        <button class="toggle on">极轴</button>
        <button class="toggle on">对象捕捉</button>
        <button class="toggle on">对象追踪</button>
        <button class="toggle">线宽(LW)</button>
        <button class="toggle on">MODEL</button>
      </div>
    </div>
    <output class="pane coords">(376.472,337.616,0)</output>
    <svg class="resize" viewBox="0 0 10 10"><path d="M7 1h2v2H7zM4 4h2v2H4zM7 4h2v2H7zM1 7h2v2H1zM4 7h2v2H4zM7 7h2v2H7z" /></svg>
  </footer>

  <div class="watermark">
    <svg viewBox="0 0 56 58">
      <path d="M1 31C1 10 20-2 38 3c8 3 14 9 16 17C48 12 40 9 32 9L13 24v9H9c-3 3-7 2-8-2z" fill="#1a82c4" />
      <path d="M17 25l14-11 13 10v8h-8v-6h-7v6H17z" fill="#1a82c4" />
      <path d="M2 39c5 2 10 1 15-3h8v19C14 54 5 47 2 39z" fill="#f08a3c" />
      <path d="M30 56V36h14l6-3V20l3 3c7 17-4 33-23 33z" fill="#f08a3c" />
    </svg>
    <div>
      <p class="site">河东软件园</p>
      <p class="url">www.pc0359.cn</p>
    </div>
  </div>
</body>

</html>
```
FILE: styles.css
```css
* {
  box-sizing: border-box;
}

body {
  margin: 0;
  height: 100vh;
  display: flex;
  flex-direction: column;
  border: 1px solid #1a7fd4;
  background: #f0f0f0;
  color: #000;
  font-family: "Open Sans", "Noto Sans CJK SC", sans-serif;
  font-size: 12px;
  overflow: hidden;
}

button,
input,
select,
textarea {
  font: inherit;
  color: inherit;
  margin: 0;
  padding: 0;
  border: none;
  border-radius: 0;
  background: none;
  outline: none;
}

h1,
h2,
p {
  margin: 0;
  font-size: 12px;
  font-weight: normal;
}

svg {
  display: block;
  flex: none;
}

.defs {
  position: absolute;
  width: 0;
  height: 0;
}

/* icon strokes */
.line {
  fill: none;
  stroke: #000;
}

.bold {
  stroke-width: 2;
}

.dash {
  fill: none;
  stroke: #000;
  stroke-dasharray: 2 1;
}

.gray {
  stroke: #666;
}

.blue {
  fill: #1010f0;
}

.blue-line {
  fill: none;
  stroke: #1010f0;
  stroke-width: 1.5;
}

.sky-line {
  fill: none;
  stroke: #2080e8;
  stroke-width: 2;
}

.undo {
  fill: none;
  stroke: #a8a8a8;
  stroke-width: 2;
}

.cloud {
  stroke-dasharray: 2 1;
}

.dot-red {
  fill: #c04060;
  stroke: #802038;
  stroke-width: 0.7;
}

.dot-gold {
  fill: #ffc800;
  stroke: #403000;
  stroke-width: 0.9;
}

.dot-open {
  fill: #fff;
  stroke: #000;
}

.ring-gold {
  fill: none;
  stroke: #9a7a28;
  stroke-width: 1.5;
}

.glyph {
  font-family: "Liberation Sans", sans-serif;
  font-weight: bold;
}

.serif {
  font-family: "Liberation Serif", serif;
  font-size: 13px;
  font-weight: normal;
}

.tiny {
  font-size: 7px;
}

.axis {
  font-size: 8px;
}

/* title and menu */
.titlebar {
  display: flex;
  flex: none;
  height: 30px;
  align-items: center;
  background: #fff;
  padding-left: 8px;
}

.app-icon {
  width: 16px;
  height: 16px;
}

.title {
  flex: 1;
  padding-left: 5px;
  font-size: 13px;
  white-space: nowrap;
}

.win-btn {
  width: 46px;
  height: 28px;
  display: grid;
  place-items: center;
}

.win-btn svg {
  width: 11px;
  height: 11px;
}

.menubar {
  display: flex;
  flex: none;
  height: 24px;
  align-items: center;
  border-bottom: 1px solid #a0a0a0;
}

.menu-logo {
  width: 16px;
  height: 16px;
}

.menu {
  padding: 0 9px 0 8px;
  white-space: nowrap;
}

.mdi {
  display: flex;
  align-self: flex-start;
  margin-left: auto;
  padding: 1px;
}

.mdi-btn {
  width: 18px;
  height: 18px;
  display: grid;
  place-items: center;
  background: #fff;
  border: 1px solid #e0e0e0;
  color: #6c7a88;
}

.mdi-btn svg {
  width: 9px;
  height: 9px;
}

/* toolbars */
.toolbar {
  display: flex;
  flex: none;
  height: 30px;
  align-items: center;
  border-top: 1px solid #fff;
  border-bottom: 1px solid #a0a0a0;
}

.toolbar-row {
  display: flex;
}

.handle {
  flex: none;
  width: 3px;
  height: 24px;
  margin: 0 3px 0 4px;
  background: repeating-linear-gradient(#b4b4b4 0 2px, transparent 2px 4px);
}

.tool {
  flex: none;
  width: 27px;
  height: 26px;
  display: grid;
  place-items: center;
}

.tool svg {
  width: 18px;
  height: 18px;
}

.sep {
  flex: none;
  width: 2px;
  height: 21px;
  margin: 0 2px;
  border-left: 1px solid #909090;
  border-right: 1px solid #fff;
}

.layer-bar {
  flex: 1;
  min-width: 0;
}

.prop-bar {
  width: 309px;
  border-left: 1px solid #a0a0a0;
}

.prop-bar .combo {
  flex: 0 1 118px;
}

.more {
  margin-left: auto;
  padding: 0 2px 5px 0;
}

.more svg {
  width: 10px;
  height: 8px;
}

.combo {
  display: grid;
  grid-template-columns: 1fr 16px;
  align-items: center;
  flex: 1;
  height: 20px;
  min-width: 0;
  background: #fff;
  border: 1px solid #a8a8ac;
}

.combo select {
  grid-area: 1 / 1 / 2 / 3;
  width: 100%;
  height: 18px;
  padding: 0 16px 0 2px;
  appearance: none;
  font-family: "Liberation Serif", "Noto Sans CJK SC", serif;
}

.combo .arrow {
  grid-area: 1 / 2 / 2 / 3;
  height: 18px;
  display: grid;
  place-items: center;
  background: #e1e1e1;
  border: 1px solid #adadad;
  color: #555;
  pointer-events: none;
}

.arrow svg {
  width: 14px;
  height: 14px;
}

.swatch,
.sample,
.layer-icons {
  grid-area: 1 / 1 / 2 / 2;
  pointer-events: none;
}

.swatch {
  width: 12px;
  height: 12px;
  margin-left: 5px;
}

.sample {
  width: 32px;
  margin-left: 3px;
  border-top: 1px solid #000;
}

.layer-icons {
  width: 76px;
  height: 16px;
  margin-left: 5px;
}

.color-combo select {
  padding-left: 21px;
}

.weight-combo select {
  padding-left: 37px;
}

.layer-combo {
  flex: 0 1 300px;
}

.layer-combo select {
  padding-left: 85px;
}

.combo.disabled {
  background: #f0f0f0;
  border-color: #b0ceec;
}

.disabled .arrow {
  background: #ccc;
  color: #aaa;
}

/* workspace */
.workspace {
  flex: 1;
  display: flex;
  min-height: 0;
}

.palettes {
  display: flex;
  border-bottom: 1px solid #a0a0a0;
}

.palette {
  width: 31px;
  display: flex;
  flex-direction: column;
  align-items: center;
  border-right: 1px solid #a0a0a0;
  box-shadow: inset 1px 0 #fff;
}

.palette .tool {
  width: 28px;
}

.grip {
  flex: none;
  width: 26px;
  height: 2px;
  margin: 4px 0;
  background: repeating-linear-gradient(90deg, #b4b4b4 0 2px, transparent 2px 4px);
}

.rule {
  flex: none;
  width: 24px;
  height: 2px;
  margin: 2px 0;
  border-top: 1px solid #909090;
  border-bottom: 1px solid #fff;
}

.right {
  flex: 1;
  min-width: 0;
  display: flex;
  flex-direction: column;
}

.upper {
  flex: 1;
  min-height: 0;
  display: flex;
  border-bottom: 2px solid #808080;
}

.drawing {
  flex: 1;
  min-width: 0;
  display: flex;
  flex-direction: column;
  margin-right: 2px;
}

.canvas {
  flex: 1;
  position: relative;
  display: flex;
  align-items: flex-end;
  background: #000;
}

.ucs {
  width: 80px;
  height: 80px;
  margin: 0 0 37px 12px;
  fill: none;
  stroke: #fff;
}

.cursor {
  position: absolute;
  left: 452px;
  top: 0;
  width: 14px;
  height: 22px;
}

.tabs {
  display: flex;
  height: 15px;
}

.tab {
  display: flex;
  height: 14px;
  margin-right: 1px;
  font-family: "Liberation Serif", "Noto Sans CJK SC", serif;
}

.tab svg {
  width: 10px;
  height: 14px;
  fill: none;
  stroke: #000;
}

.tab svg path {
  stroke-dasharray: 18 100;
}

.tab span {
  height: 14px;
  min-width: 40px;
  line-height: 13px;
  border-bottom: 1px solid #000;
}

.tab.active span {
  min-width: 27px;
  background: #fff;
}

.tab.active svg {
  fill: #fff;
}

.properties {
  width: 226px;
  display: flex;
  flex-direction: column;
  min-height: 0;
  padding: 2px 0 12px;
  border-left: 2px solid #707070;
}

.dock-title {
  display: flex;
  flex: none;
  height: 17px;
  align-items: center;
  gap: 6px;
  padding: 0 3px 0 2px;
  border: 1px solid #a0a0a0;
}

.dock-title h2 {
  flex: 1;
  line-height: 14px;
}

.dock-title svg {
  width: 9px;
  height: 9px;
}

.selector {
  display: flex;
  gap: 8px;
  margin: 13px 12px 7px 11px;
}

.square {
  flex: none;
  width: 21px;
  height: 20px;
  display: grid;
  place-items: center;
  background: #e1e1e1;
  border: 1px solid #adadad;
}

.square svg {
  width: 18px;
  height: 18px;
}

.sheet {
  flex: 1;
  min-height: 0;
  display: flex;
  margin: 0 11px;
  border: 1px solid #828790;
}

.groups {
  flex: 1;
  min-width: 0;
  overflow: hidden;
  padding: 7px 9px 0;
}

fieldset {
  min-width: 0;
  margin: 0 0 5px;
  padding: 8px 9px;
  border: 1px solid #dcdcdc;
}

legend {
  height: 16px;
  line-height: 16px;
  margin-left: -2px;
  padding: 0 2px;
}

.row {
  display: flex;
  align-items: center;
  gap: 10px;
  height: 20px;
}

.row-icon {
  width: 20px;
  height: 18px;
}

.row input {
  flex: 1;
  min-width: 0;
  height: 20px;
  padding: 0 3px;
  background: #fff;
  border: 1px solid #a8a8ac;
  font-family: "Liberation Serif", "Noto Sans CJK SC", serif;
}

.row input.locked {
  background: #b0ceec;
}

.scrollbar {
  width: 17px;
  display: flex;
  flex-direction: column;
  align-items: center;
  border-left: 1px solid #fff;
  color: #404040;
}

.scrollbar svg {
  width: 16px;
  height: 17px;
}

.scrollbar .up {
  transform: rotate(180deg);
}

.thumb {
  width: 15px;
  flex: 0 1 253px;
  margin-bottom: auto;
  background: #cdcdcd;
}

/* command window */
.command {
  flex: none;
  padding-top: 2px;
}

.history {
  display: block;
  width: 100%;
  height: 75px;
  margin-top: 2px;
  resize: none;
  background: #fff;
  border: 1px solid #828790;
}

.prompt {
  display: flex;
  align-items: center;
  height: 16px;
  padding-left: 4px;
  background: #fff;
}

.prompt input {
  flex: 1;
}

/* status bar */
.statusbar {
  display: flex;
  flex: none;
  height: 30px;
  align-items: center;
  padding: 0 2px 0 187px;
}

.pane {
  height: 26px;
  padding: 1px 0 1px 4px;
  border-left: 1px solid #d0d0d0;
}

.toggles {
  display: flex;
  gap: 9px;
  height: 24px;
  align-items: center;
  padding: 0 1px;
  border: 1px solid #dcdcdc;
}

.pane + .pane {
  margin-left: 1px;
}

.toggle {
  min-width: 37px;
  height: 21px;
  padding: 0 5px;
  background: #e1e1e1;
  border: 1px solid #adadad;
  line-height: 19px;
  white-space: nowrap;
}

.toggle.on {
  background: #cce4f7;
  border-color: #005499;
}

.coords {
  flex: 1;
  line-height: 24px;
  margin-right: 8px;
  border-right: 1px solid #d0d0d0;
}

.resize {
  width: 10px;
  height: 10px;
  align-self: flex-end;
  fill: #bfbfbf;
}

/* site mark over the top left corner */
.watermark {
  position: absolute;
  left: 7px;
  top: 10px;
  display: flex;
  gap: 3px;
  opacity: 0.75;
  pointer-events: none;
}

.watermark svg {
  width: 56px;
  height: 58px;
}

.site {
  color: #3f9be0;
  font-family: "Noto Sans CJK SC", sans-serif;
  font-size: 27px;
  font-weight: bold;
  line-height: 38px;
}

.url {
  color: #3aa03a;
  font-family: "Liberation Serif", serif;
  font-size: 20px;
  font-weight: bold;
  line-height: 20px;
}
```
